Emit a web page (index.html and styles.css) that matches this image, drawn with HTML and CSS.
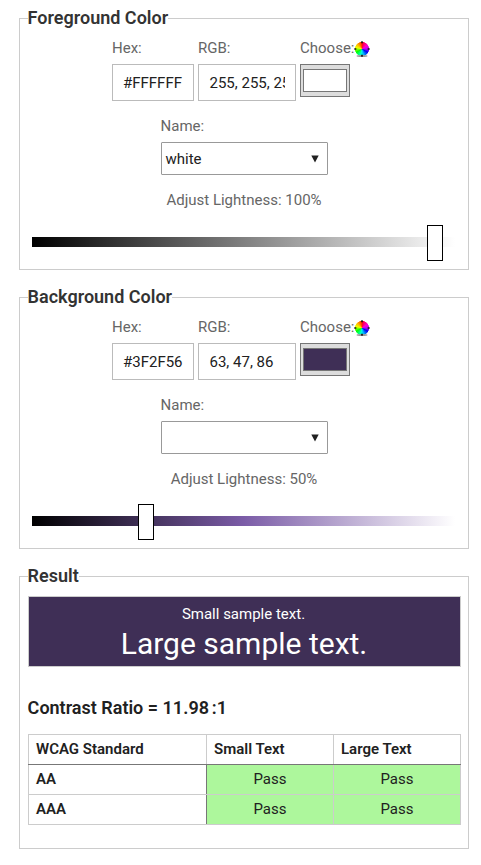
FILE: index.html
```html
<!DOCTYPE html>
<html lang="en">
<head>
<meta charset="utf-8">
<title>Contrast Checker</title>
<link rel="stylesheet" href="styles.css">
</head>
<body>
<main class="checker">
  <section class="panel">
    <h2 class="legend">Foreground Color</h2>
    <div class="fields">
      <label class="field hex"><span class="label">Hex:</span><span class="input"><span class="value">#FFFFFF</span></span></label>
      <label class="field rgb"><span class="label">RGB:</span><span class="input"><span class="value">255, 255, 255</span></span></label>
      <label class="field choose"><span class="label">Choose:<span class="wheel"><svg width="16" height="17" viewBox="0 0 16 17"><ellipse cx="8" cy="15" rx="5.5" ry="1.1" fill="#999"/><path d="M8 .3v2M8 13.7v2M.3 8h2M13.7 8h2" stroke="#111" stroke-width="1.6"/></svg></span></span><span class="swatch"><span class="chip white"></span></span></label>
    </div>
    <label class="name"><span class="label">Name:</span><span class="select">white<svg class="arrow" width="8" height="8" viewBox="0 0 8 8"><path d="M.3.5h7.4L4 7.5z"/></svg></span></label>
    <div class="lightness">Adjust Lightness: 100%</div>
    <div class="slider gray"><span class="thumb end"></span></div>
  </section>
  <section class="panel">
    <h2 class="legend">Background Color</h2>
    <div class="fields">
      <label class="field hex"><span class="label">Hex:</span><span class="input"><span class="value">#3F2F56</span></span></label>
      <label class="field rgb"><span class="label">RGB:</span><span class="input"><span class="value">63, 47, 86</span></span></label>
      <label class="field choose"><span class="label">Choose:<span class="wheel"><svg width="16" height="17" viewBox="0 0 16 17"><ellipse cx="8" cy="15" rx="5.5" ry="1.1" fill="#999"/><path d="M8 .3v2M8 13.7v2M.3 8h2M13.7 8h2" stroke="#111" stroke-width="1.6"/></svg></span></span><span class="swatch"><span class="chip purple"></span></span></label>
    </div>
    <label class="name"><span class="label">Name:</span><span class="select"><svg class="arrow" width="8" height="8" viewBox="0 0 8 8"><path d="M.3.5h7.4L4 7.5z"/></svg></span></label>
    <div class="lightness">Adjust Lightness: 50%</div>
    <div class="slider violet"><span class="thumb low"></span></div>
  </section>
  <section class="panel result">
    <h2 class="legend">Result</h2>
    <div class="sample"><p class="small">Small sample text.</p><p class="large">Large sample text.</p></div>
    <h3 class="ratio">Contrast Ratio = <span class="number">11.98</span>:1</h3>
    <table>
      <thead><tr><th class="standard">WCAG Standard</th><th>Small Text</th><th>Large Text</th></tr></thead>
      <tbody>
        <tr><th>AA</th><td>Pass</td><td>Pass</td></tr>
        <tr><th>AAA</th><td>Pass</td><td>Pass</td></tr>
      </tbody>
    </table>
  </section>
</main>
</body>
</html>
```
FILE: styles.css
```css
* { box-sizing: border-box; }
body { margin: 0; background: #fff; color: #212121; font: 15px/20px Roboto, sans-serif; }
.checker { display: flex; flex-direction: column; gap: 27px; padding: 18px 12px 0 19px; }
.panel { height: 252px; padding: 0 8px; border: 1px solid #ccc; }
.result { height: 273px; padding-right: 7px; }
.legend { width: max-content; margin: -13px 0 0 -.4px; background: #fff; color: #333; font-size: 18px; line-height: 24px; font-weight: 600; }
.fields { display: flex; gap: 4px; margin: 8px 0 0 84px; height: 63px; }
.field { display: flex; flex-direction: column; gap: 6px; }
.hex { width: 82px; }
.rgb { width: 98px; }
.choose { width: 75px; }
.label { display: flex; color: #666; white-space: nowrap; }
.input { height: 37px; padding: 8px 10px; border: 1px solid #bbb; }
.rgb .value { text-indent: .5px; }
.value { display: block; overflow: hidden; white-space: nowrap; }
.wheel { display: block; width: 16px; height: 17px; margin: 3px 0 0; background: radial-gradient(circle 7.3px at 8px 8px, transparent 93%, #fff 100%), conic-gradient(from 0deg at 8px 8px, #f02, #f0c 55deg, #b0f 90deg, #00e 120deg, #0bf 165deg, #0fd 190deg, #0f0 240deg, #ef0 285deg, #fb0 315deg, #f20); }
.wheel svg { display: block; }
.swatch { width: 50px; height: 33px; padding: 4px 2px; border: 1px solid #767676; background: #ddd; }
.chip { display: block; height: 23px; border: 1px solid #777; }
.white { background: #fff; }
.purple { background: #3f2f56; }
.name { display: flex; flex-direction: column; gap: 6px; width: 167px; margin: 15px 0 0 133px; }
.name .label { margin-left: -.4px; }
.select { display: flex; align-items: center; height: 33px; padding: 0 8px 0 3.5px; border: 1px solid #999; border-radius: 1px; }
.arrow { margin-left: auto; fill: #212121; }
.lightness { margin-top: 15px; text-align: center; color: #666; }
.slider { position: relative; height: 10px; margin: 27px 5px 0 4px; }
.gray { background: linear-gradient(to right, #000, #808080 50%, #fff); }
.violet { background: linear-gradient(to right, #000, #7b5ca7 50%, #fff); }
.thumb { position: absolute; top: -12px; width: 16px; height: 36px; border: 1px solid #000; background: #fff; }
.end { left: 395px; }
.low { left: 106px; }
.sample { height: 71px; margin-top: 8px; padding-top: 7px; border: 1px solid #ccc; background: #3f2f56; color: #fff; text-align: center; }
.sample p { margin: 0; }
.sample .small { margin-left: -2px; font-size: 15px; }
.sample .large { margin-left: -1px; font-size: 30px; line-height: 40px; }
.ratio { margin: 29px 0 0 -.4px; font-size: 18px; line-height: 24px; font-weight: 600; }
.number { margin-right: 2.5px; letter-spacing: .1px; }
table { width: 433px; margin-top: 14px; border-collapse: collapse; table-layout: fixed; }
th, td { height: 30px; padding: 0 7px 2px; border: 1px solid #ccc; line-height: 20px; }
th { text-align: left; font-weight: 600; }
.standard { width: 178px; }
thead th { border-bottom-color: #777; }
tbody th { border-right-color: #777; }
td { background: #adf79c; text-align: center; }
tbody tr:first-child > * { border-top-color: #777; }
tbody td:nth-child(2) { border-left-color: #777; }
```
